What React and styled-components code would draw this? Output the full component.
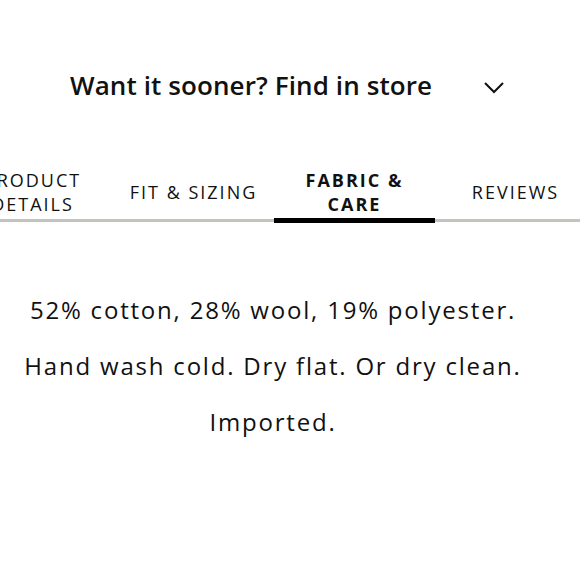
import styled, { createGlobalStyle } from 'styled-components';

const Global = createGlobalStyle`
  html, body { margin: 0; padding: 0; background: #fff; }
  body { font-family: "Open Sans", "Noto Sans", sans-serif; color: #111; }
`;

const tabs = ['PRODUCT DETAILS', 'FIT & SIZING', 'FABRIC & CARE', 'REVIEWS'];

const App = () => {
  return (
    <Page>
      <Global />
      <StoreRow>
        <StoreTitle>Want it sooner? Find in store</StoreTitle>
        <Chevron viewBox="0 0 20 12" width="20" height="12">
          <path d="M1 1 L10 10 L19 1" fill="none" stroke="#111" strokeWidth="2" />
        </Chevron>
      </StoreRow>
      <TabBar>
        {tabs.map((t) => (
          <Tab key={t} $active={t === 'FABRIC & CARE'}>
            <span>{t}</span>
          </Tab>
        ))}
      </TabBar>
      <Body>
        <Line>52% cotton, 28% wool, 19% polyester.</Line>
        <Line>Hand wash cold. Dry flat. Or dry clean.</Line>
        <Line>Imported.</Line>
      </Body>
    </Page>
  );
};

const Page = styled.div`
  width: 580px;
  height: 580px;
  overflow: hidden;
`;

const StoreRow = styled.div`
  display: flex;
  align-items: center;
  padding: 68px 0 0 70px;
  height: 34px;
`;

const StoreTitle = styled.h2`
  margin: 0;
  font-size: 26px;
  font-weight: 600;
  letter-spacing: 0.1px;
  color: #111;
  width: 414px;
  white-space: nowrap;
`;

const Chevron = styled.svg`
  margin-top: 6px;
`;

const TabBar = styled.div`
  display: flex;
  margin: 63px 0 0 -48px;
  width: 680px;
  border-bottom: 3px solid #c4c4bf;
  height: 54px;
`;

const Tab = styled.div`
  flex: 0 0 161px;
  display: flex;
  align-items: center;
  justify-content: center;
  text-align: center;
  font-size: 18px;
  letter-spacing: 2px;
  line-height: 24px;
  font-weight: ${(p) => (p.$active ? 700 : 400)};
  position: relative;
  span { display: block; width: ${(p) => (p.$active ? '110px' : '130px')}; }
  &::after {
    content: '';
    position: absolute;
    left: 0;
    right: 0;
    bottom: -4px;
    height: 5px;
    background: ${(p) => (p.$active ? '#000' : 'transparent')};
  }
`;

const Body = styled.div`
  display: flex;
  flex-direction: column;
  align-items: center;
  padding: 74px 34px 0 0;
  gap: 28px;
`;

const Line = styled.p`
  margin: 0;
  font-size: 24px;
  line-height: 28px;
  letter-spacing: 1.8px;
  color: #111;
  white-space: nowrap;
`;

export default App;
